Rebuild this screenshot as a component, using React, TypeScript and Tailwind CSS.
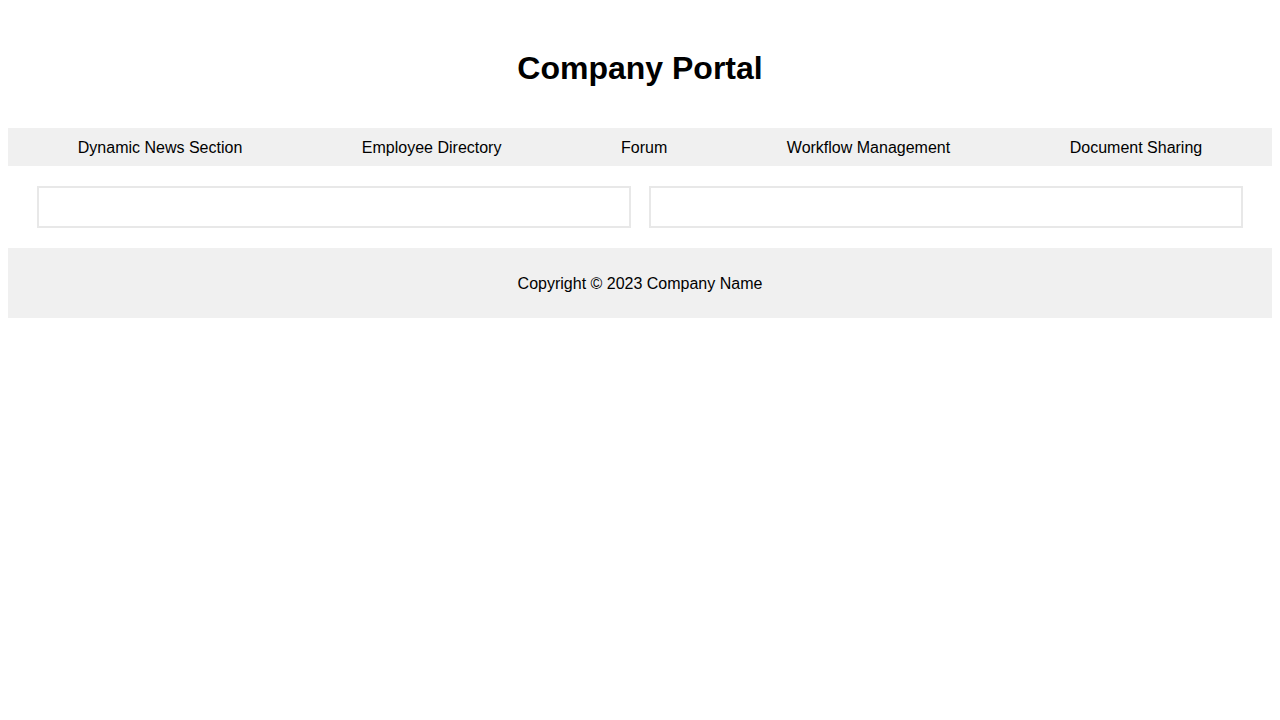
const navItems = [
  "Dynamic News Section",
  "Employee Directory",
  "Forum",
  "Workflow Management",
  "Document Sharing",
];

export default function App() {
  return (
    <div className="m-2 font-['Liberation_Sans',Arial,sans-serif] text-black">
      <header className="py-5 text-center">
        <h1 className="mt-[22px] mb-[21px] text-[32px] font-bold leading-[37px]">Company Portal</h1>
      </header>
      <nav className="bg-[#f0f0f0] px-[10px] pt-[11px] pb-[9px]">
        <ul className="flex justify-around text-base leading-[18px]">
          {navItems.map((item) => (
            <li key={item}>
              <a href="#">{item}</a>
            </li>
          ))}
        </ul>
      </nav>
      <main className="flex gap-[18px] px-[29px] py-5">
        <section className="h-[42px] flex-1 border-2 border-[#e8e8e8]" />
        <section className="h-[42px] flex-1 border-2 border-[#e8e8e8]" />
      </main>
      <footer className="bg-[#f0f0f0] pt-[27px] pb-[25px] text-center text-base">
        <p className="leading-[18px]">Copyright © 2023 Company Name</p>
      </footer>
    </div>
  );
}
